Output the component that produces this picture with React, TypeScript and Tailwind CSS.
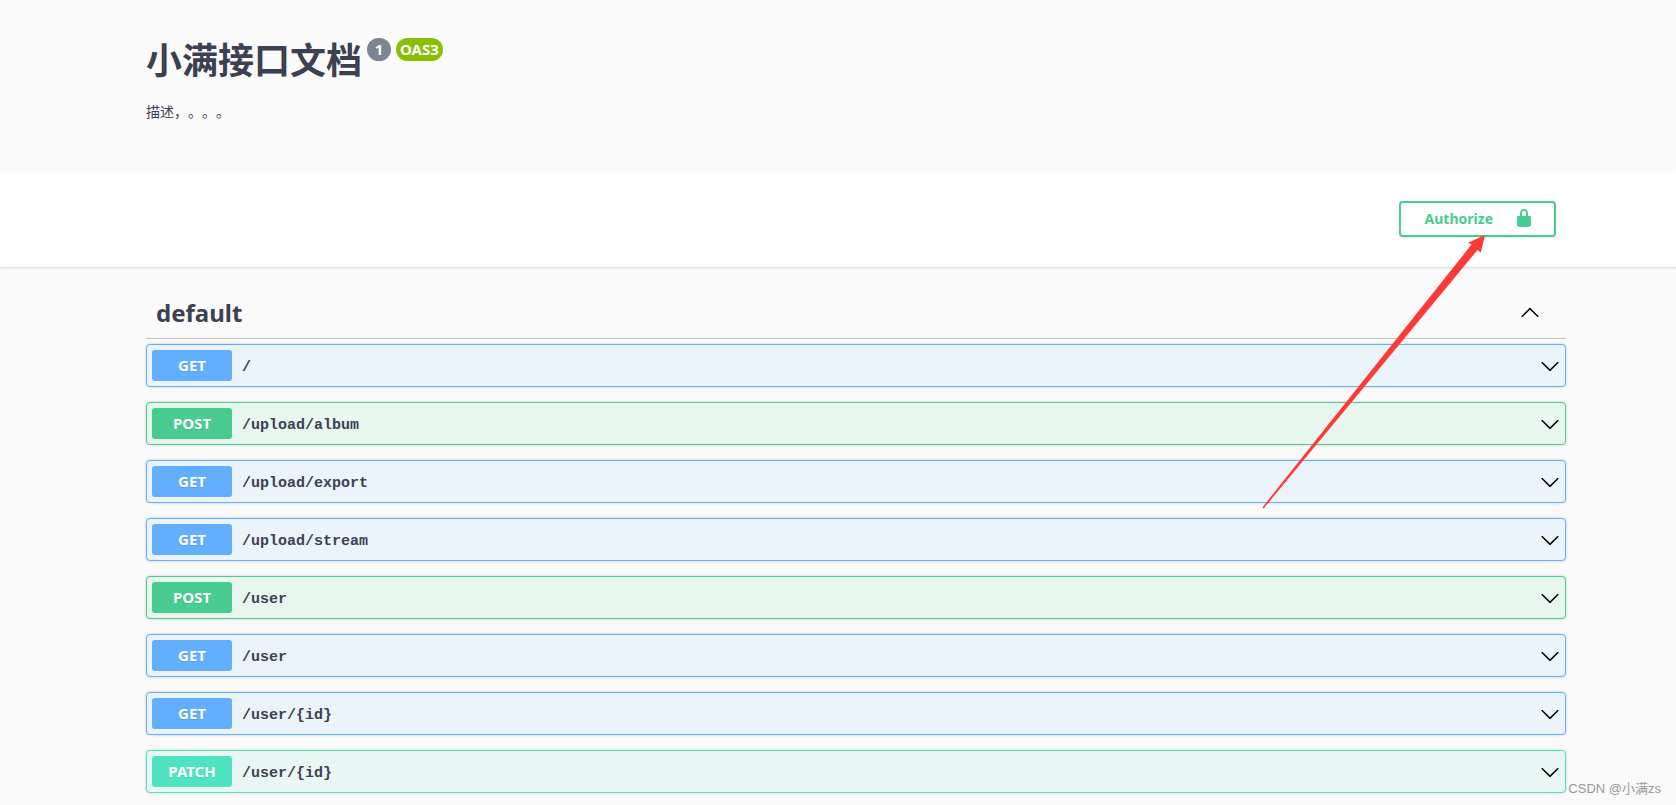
type Method = "GET" | "POST" | "PATCH";

const operations: { method: Method; path: string }[] = [
  { method: "GET", path: "/" },
  { method: "POST", path: "/upload/album" },
  { method: "GET", path: "/upload/export" },
  { method: "GET", path: "/upload/stream" },
  { method: "POST", path: "/user" },
  { method: "GET", path: "/user" },
  { method: "GET", path: "/user/{id}" },
  { method: "PATCH", path: "/user/{id}" },
];

const rowStyles: Record<Method, string> = {
  GET: "border-[#61affe] bg-[#ebf3fb]",
  POST: "border-[#49cc90] bg-[#e8f6f0]",
  PATCH: "border-[#50e3c2] bg-[#e9f7f4]",
};

const badgeStyles: Record<Method, string> = {
  GET: "bg-[#61affe]",
  POST: "bg-[#49cc90]",
  PATCH: "bg-[#50e3c2]",
};

function Chevron({ up = false }: { up?: boolean }) {
  return (
    <svg width="20" height="20" viewBox="0 0 20 20" fill="#000" aria-hidden="true">
      {up ? (
        <path d="M17.418 13.908c.272.281.709.281.979 0s.271-.741 0-1.021l-7.908-7.83c-.27-.281-.707-.281-.979 0l-7.908 7.83c-.27.28-.27.74 0 1.021s.709.281.979 0L10 6.767l7.418 7.141z" />
      ) : (
        <path d="M17.418 6.109c.272-.268.709-.268.979 0s.271.701 0 .969l-7.908 7.83c-.27.268-.707.268-.979 0l-7.908-7.83c-.27-.268-.27-.701 0-.969s.709-.268.979 0L10 13.25l7.418-7.141z" />
      )}
    </svg>
  );
}

function LockIcon() {
  return (
    <svg width="20" height="20" viewBox="0 1 20 20" fill="#49cc90" aria-hidden="true">
      <path d="M15.8 8H14V5.6C14 2.703 12.665 1 10 1 7.334 1 6 2.703 6 5.6V8H4c-.553 0-1 .646-1 1.199V17c0 .549.428 1.139.951 1.307l1.197.387C5.672 18.861 6.55 19 7.1 19h5.8c.549 0 1.428-.139 1.951-.307l1.196-.387c.524-.167.953-.757.953-1.306V9.199C17 8.646 16.352 8 15.8 8zM12 8H8V5.199C8 3.754 8.797 3 10 3c1.203 0 2 .754 2 2.199V8z" />
    </svg>
  );
}

function Operation({ method, path }: { method: Method; path: string }) {
  return (
    <li>
      <button
        type="button"
        className={`flex w-full items-center rounded-sm border p-[5px] text-left shadow-[0_0_3px_rgba(0,0,0,0.19)] ${rowStyles[method]}`}
      >
        <span
          className={`w-20 rounded-[3px] text-center text-[15px] leading-[31px] font-bold text-white [text-shadow:0_1px_0_rgba(0,0,0,0.1)] ${badgeStyles[method]}`}
        >
          {method}
        </span>
        <span className="flex-1 px-2.5 pt-1 font-['Liberation_Mono',monospace] text-[15px] leading-5 font-bold text-[#3b4151]">
          {path}
        </span>
        <Chevron />
      </button>
    </li>
  );
}

export default function App() {
  return (
    <div className="relative h-screen overflow-hidden bg-[#fafafa] font-['Noto_Sans','Noto_Sans_CJK_SC',sans-serif] text-[#3b4151]">
      <header className="h-[171px] pt-9 pr-[110px] pl-[146px]">
        <div className="flex items-start gap-[5px]">
          <h1 className="font-['Noto_Sans_CJK_SC',sans-serif] text-4xl leading-[44px] font-bold">小满接口文档</h1>
          <span className="mt-0.5 w-6 rounded-full bg-[#7d8492] text-center text-[15px] leading-[23px] font-bold text-white">
            1
          </span>
          <span className="mt-0.5 rounded-full bg-[#89bf04] px-1 text-[15px] leading-[23px] font-bold text-white">
            OAS3
          </span>
        </div>
        <p className="mt-[21px] font-['Noto_Sans_CJK_SC',sans-serif] text-sm leading-5 [text-spacing-trim:space-all]">
          描述，。。。
        </p>
      </header>

      <section className="flex justify-end bg-white py-[30px] pr-[120px] shadow-[0_1px_2px_rgba(0,0,0,0.15)]">
        <button
          type="button"
          className="flex h-9 items-center justify-between gap-[21px] rounded-sm border-2 border-[#49cc90] pr-5 pl-6 text-sm font-bold text-[#49cc90] shadow-[0_1px_2px_rgba(0,0,0,0.1)]"
        >
          Authorize
          <LockIcon />
        </button>
      </section>

      <main className="pr-[110px] pl-[146px]">
        <h2 className="border-b border-[#3b4151]/30 pt-5">
          <button type="button" className="flex h-[51px] w-full items-center pr-[26px] pl-2.5 text-2xl font-bold">
            <span className="flex-1 text-left">default</span>
            <Chevron up />
          </button>
        </h2>
        <ul className="mt-[5px] flex flex-col gap-[15px]">
          {operations.map((op) => (
            <Operation key={op.method + op.path} {...op} />
          ))}
        </ul>
      </main>

      <svg
        className="pointer-events-none absolute top-[235px] left-[1262px]"
        width="224"
        height="275"
        viewBox="1262 235 224 275"
        fill="#fc3a38"
        aria-hidden="true"
      >
        <path d="M1485 235 L1468 242.8 L1471.5 244.6 L1262.4 507.4 L1263.6 508.6 L1477.5 250 L1480.8 252.5 Z" />
      </svg>

      <p className="absolute right-[15px] bottom-1.5 font-['Liberation_Sans','Noto_Sans_CJK_SC',sans-serif] text-[13px] leading-5 text-[#999]">
        CSDN @小满zs
      </p>
    </div>
  );
}
